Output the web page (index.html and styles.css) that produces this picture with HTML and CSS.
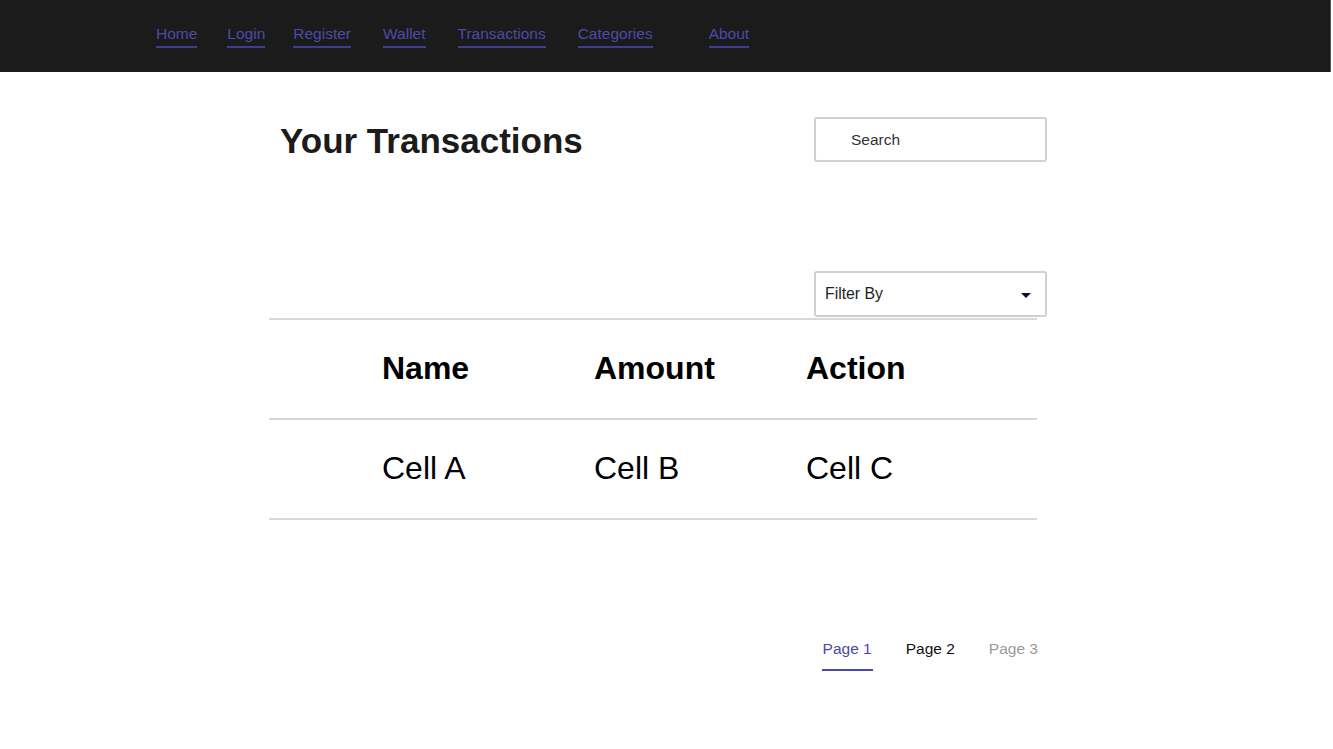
FILE: index.html
```html
<!DOCTYPE html>
<html lang="en">
<head>
<meta charset="utf-8">
<title>Your Transactions</title>
<link rel="stylesheet" href="styles.css">
</head>
<body>
<nav class="topnav">
  <a class="navlink" href="#">Home</a>
  <a class="navlink" href="#">Login</a>
  <a class="navlink nl-tight" href="#">Register</a>
  <a class="navlink nl-wide" href="#">Wallet</a>
  <a class="navlink nl-wide" href="#">Transactions</a>
  <a class="navlink nl-wide" href="#">Categories</a>
  <a class="navlink nl-about" href="#">About</a>
</nav>
<main class="content">
  <div class="header-row">
    <h1 class="title">Your Transactions</h1>
    <div class="search-box">Search</div>
  </div>
  <div class="filter-row">
    <div class="filter-box"><span>Filter By</span><span class="caret"></span></div>
  </div>
  <div class="table">
    <div class="row head">
      <div class="cell">Name</div>
      <div class="cell">Amount</div>
      <div class="cell">Action</div>
    </div>
    <div class="row">
      <div class="cell">Cell A</div>
      <div class="cell">Cell B</div>
      <div class="cell">Cell C</div>
    </div>
  </div>
  <div class="pager">
    <a class="page active" href="#">Page 1</a>
    <a class="page current" href="#">Page 2</a>
    <a class="page muted" href="#">Page 3</a>
  </div>
</main>
</body>
</html>
```
FILE: styles.css
```css
html, body {
  margin: 0;
  padding: 0;
  background: #ffffff;
  font-family: "Liberation Sans", Arial, sans-serif;
}

.topnav {
  width: 1331px;
  height: 72px;
  background: #1b1b1b;
  border-right: 1px solid #555;
  display: flex;
  align-items: center;
  padding-left: 156px;
  box-sizing: border-box;
}

.navlink {
  font-size: 15.5px;
  line-height: 17px;
  color: #4d4aa8;
  text-decoration: none;
  padding-bottom: 4px;
  border-bottom: 2px solid #3f3d8f;
  margin-left: 30px;
}

.navlink:first-child {
  margin-left: 0;
}

.nl-tight {
  margin-left: 28px;
}

.nl-wide {
  margin-left: 32px;
}

.nl-about {
  margin-left: 56px;
}

.content {
  width: 778px;
  margin-left: 269px;
}

.header-row {
  display: flex;
  justify-content: space-between;
  align-items: center;
  margin-top: 45px;
}

.title {
  margin: 3px 0 0 11px;
  font-size: 35px;
  font-weight: bold;
  color: #1b1b1b;
  line-height: 40px;
}

.search-box {
  width: 233px;
  height: 45px;
  box-sizing: border-box;
  border: 2px solid #d0d0d0;
  border-radius: 3px;
  padding-left: 35px;
  display: flex;
  align-items: center;
  font-size: 15.5px;
  color: #333;
}

.filter-row {
  display: flex;
  justify-content: flex-end;
  margin-top: 109px;
}

.filter-box {
  width: 233px;
  height: 46px;
  box-sizing: border-box;
  border: 2px solid #d0d0d0;
  border-radius: 3px;
  padding: 0 14px 0 9px;
  display: flex;
  align-items: center;
  justify-content: space-between;
  font-size: 15.8px;
  color: #222;
}

.caret {
  width: 0;
  height: 0;
  border-left: 5px solid transparent;
  border-right: 5px solid transparent;
  border-top: 5px solid #0b0b38;
  margin-top: 2px;
}

.table {
  width: 768px;
  margin-top: 1px;
  border-top: 2px solid #d8d8d8;
}

.row {
  display: grid;
  grid-template-columns: 212px 212px auto;
  padding-left: 113px;
  height: 98px;
  align-items: center;
  border-bottom: 2px solid #d8d8d8;
  font-size: 32px;
  color: #000;
}

.cell {
  margin-bottom: 2px;
}

.row.head {
  font-weight: bold;
}

.pager {
  width: 770px;
  display: flex;
  justify-content: flex-end;
  gap: 32px;
  margin-top: 120px;
}

.page {
  font-size: 15.5px;
  line-height: 18px;
  text-decoration: none;
  padding: 0 1px 11px 1px;
  border-bottom: 2px solid transparent;
}

.page.active {
  color: #4b49b0;
  border-bottom-color: #4b49b0;
}

.page.current {
  color: #111;
}

.page.muted {
  color: #9a9a9a;
}
```
